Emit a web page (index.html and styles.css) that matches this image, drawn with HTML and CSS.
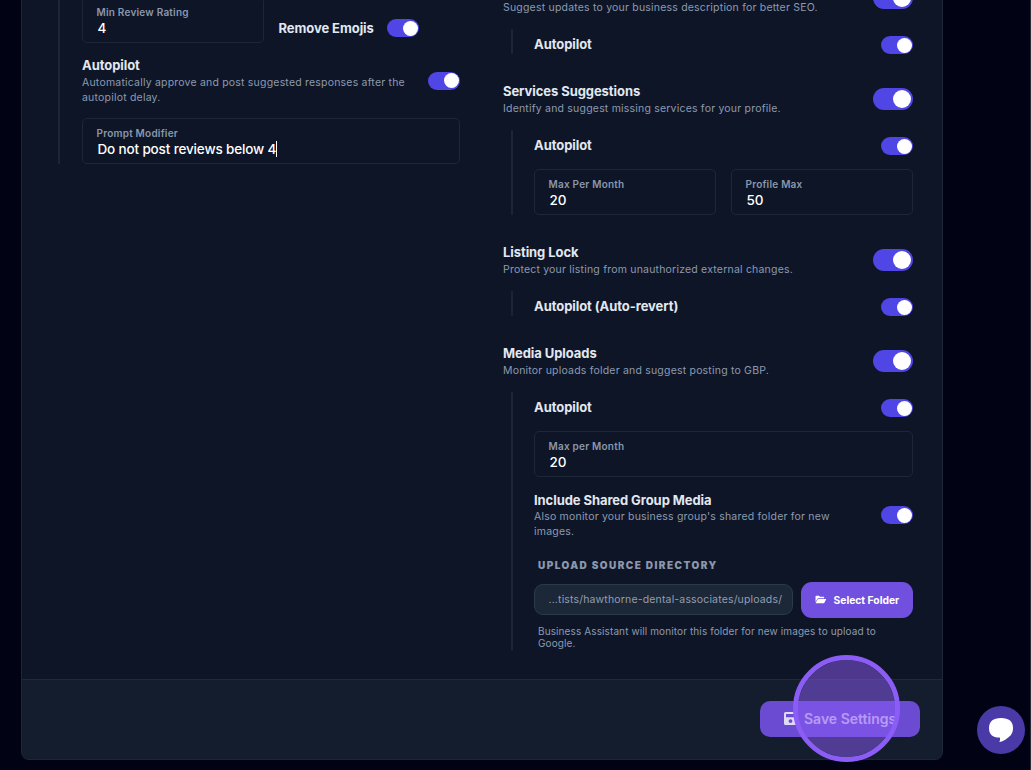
FILE: index.html
```html
<!DOCTYPE html>
<html lang="en">
  <head>
    <meta charset="utf-8">
    <title>Settings</title>
    <link rel="stylesheet" href="styles.css">
  </head>
  <body>
    <main class="card">
      <div class="columns">
        <section class="column left">
          <div class="sub reviews">
            <div class="pair">
              <label class="field"><span class="label">Min Review Rating</span><span class="value">4</span></label>
              <div class="inline-option">
                <h3>Remove Emojis</h3>
                <span class="toggle small"></span>
              </div>
            </div>
            <div class="option">
              <div class="copy wide">
                <h3>Autopilot</h3>
                <p>Automatically approve and post suggested responses after the autopilot delay.</p>
              </div>
              <span class="toggle small"></span>
            </div>
            <label class="field"><span class="label">Prompt Modifier</span><span class="value"><span class="typed">Do not post reviews below 4</span></span></label>
          </div>
        </section>

        <section class="column right">
          <div class="head">
            <div class="copy first">
              <p>Suggest updates to your business description for better SEO.</p>
            </div>
            <span class="toggle"></span>
          </div>
          <div class="sub">
            <div class="option"><h3>Autopilot</h3><span class="toggle small"></span></div>
          </div>

          <div class="head">
            <div class="copy">
              <h3>Services Suggestions</h3>
              <p>Identify and suggest missing services for your profile.</p>
            </div>
            <span class="toggle"></span>
          </div>
          <div class="sub">
            <div class="option"><h3>Autopilot</h3><span class="toggle small"></span></div>
            <div class="pair">
              <label class="field"><span class="label">Max Per Month</span><span class="value">20</span></label>
              <label class="field"><span class="label">Profile Max</span><span class="value">50</span></label>
            </div>
          </div>

          <div class="head">
            <div class="copy">
              <h3>Listing Lock</h3>
              <p>Protect your listing from unauthorized external changes.</p>
            </div>
            <span class="toggle"></span>
          </div>
          <div class="sub">
            <div class="option"><h3>Autopilot (Auto-revert)</h3><span class="toggle small"></span></div>
          </div>

          <div class="head">
            <div class="copy">
              <h3>Media Uploads</h3>
              <p>Monitor uploads folder and suggest posting to GBP.</p>
            </div>
            <span class="toggle"></span>
          </div>
          <div class="sub">
            <div class="option"><h3>Autopilot</h3><span class="toggle small"></span></div>
            <label class="field"><span class="label">Max per Month</span><span class="value">20</span></label>
            <div class="option group-media">
              <div class="copy shared">
                <h3>Include Shared Group Media</h3>
                <p>Also monitor your business group's shared folder for new images.</p>
              </div>
              <span class="toggle small"></span>
            </div>
            <div class="upload">
              <h4>Upload Source Directory</h4>
              <div class="picker">
                <span class="path">...tists/hawthorne-dental-associates/uploads/</span>
                <button class="select">
                  <svg width="12" height="9" viewBox="0 0 13 10"><path fill="#fff" d="M1.2 .8h3l1.2 1.2h3.800q.9 0 .9.9v.7H3.600q-.7 0-1.100.7L.4 7.700V1.600q0-.8.8-.8zM3.700 4.400h8.100q.8 0 .4.7l-2 3.500q-.4.7-1.200.7H1.100q-.8 0-.4-.7l2-3.500q.3-.7 1-.7z"/></svg>
                  Select Folder
                </button>
              </div>
              <p class="help">Business Assistant will monitor this folder for new images to upload to Google.</p>
            </div>
          </div>
        </section>
      </div>

      <footer class="footer">
        <button class="save">
          <svg width="13" height="13" viewBox="0 0 13 13"><path fill="currentColor" fill-rule="evenodd" d="M1.500 0h8.500L13 3v8.500q0 1.500-1.500 1.500h-10Q0 13 0 11.500v-10Q0 0 1.500 0zM2 2v3.200h8V2zM6.500 7.200a1.900 1.900 0 1 0 .01 0z"/></svg>
          Save Settings
        </button>
      </footer>
    </main>

    <div class="click-marker"></div>
    <button class="chat" aria-label="Chat">
      <svg width="24" height="24" viewBox="0 0 24 24"><path fill="#fff" d="M12 0C20 0 24 3.500 24 10C24 15.500 21.500 18 18.500 20C16 22 14 23.500 10.300 24C11.200 22.500 11.300 21 10.700 19.600C3.500 19.400 0 16.500 0 10C0 3.500 4 0 12 0z"/></svg>
    </button>
    <div class="edge"></div>
  </body>
</html>
```
FILE: styles.css
```css
* {
  box-sizing: border-box;
}

body {
  margin: 0;
  height: 770px;
  overflow: hidden;
  background: #010314;
  color: #e2e8f0;
  font-family: Inter, "Liberation Sans", sans-serif;
}

h3,
h4,
p {
  margin: 0;
}

h3 {
  font-size: 13px;
  font-weight: 700;
  line-height: 17px;
  letter-spacing: -0.07px;
}

p {
  color: #8d9aaf;
  font-size: 10.5px;
  line-height: 15px;
  letter-spacing: 0.2px;
}

button {
  border: 0;
  font-family: inherit;
  color: #fff;
}

svg {
  display: block;
  flex: none;
}

.card {
  width: 922px;
  height: 760px;
  margin-left: 21px;
  display: flex;
  flex-direction: column;
  overflow: hidden;
  background: #0e1527;
  border: 1px solid #1e2637;
  border-top: 0;
  border-radius: 0 0 8px 8px;
}

.columns {
  height: 679px;
  flex: none;
  display: grid;
  grid-template-columns: 402px 410px;
  gap: 43px;
  padding: 0 29px 0 36px;
}

.left {
  margin-top: -10px;
}

.right {
  margin-top: -18px;
}

.head {
  height: 32px;
  display: flex;
  align-items: center;
  justify-content: space-between;
}

.copy p {
  padding-top: 1px;
  margin-bottom: -1px;
}

.copy.first {
  padding-top: 17px;
}

.sub {
  display: flex;
  flex-direction: column;
  gap: 14px;
  margin: 15px 0 29px 8px;
  padding: 7px 0 0 21px;
  border-left: 2px solid #1c2435;
}

.reviews {
  margin: 0;
  padding-left: 22px;
}

.option {
  display: flex;
  align-items: center;
  justify-content: space-between;
}

.option > h3 {
  padding-bottom: 1px;
}

.group-media {
  padding-top: 1px;
}

.wide {
  width: 334px;
}

.shared {
  width: 310px;
}

.shared p {
  line-height: 14.5px;
}

.pair {
  display: grid;
  grid-template-columns: 1fr 1fr;
  gap: 15px;
}

.inline-option {
  display: flex;
  align-items: center;
  gap: 13px;
  padding-top: 16px;
}

.field {
  height: 46px;
  display: flex;
  flex-direction: column;
  padding: 7px 13.5px;
  border: 1px solid #1e2637;
  border-radius: 5px;
}

.label {
  color: #8a97ac;
  font-size: 10px;
  font-weight: 600;
  line-height: 14px;
  letter-spacing: 0.22px;
}

.value {
  color: #fff;
  font-size: 13.5px;
  font-weight: 500;
  line-height: 17px;
  letter-spacing: -0.15px;
  margin-top: 1px;
  padding-left: 1px;
}

.typed {
  display: inline-block;
  height: 16px;
  border-right: 1px solid #fff;
}

.toggle {
  width: 40px;
  height: 22px;
  flex: none;
  display: flex;
  align-items: center;
  justify-content: flex-end;
  padding-right: 2px;
  border-radius: 11px;
  background: #4f46e5;
}

.toggle::after {
  content: "";
  width: 18px;
  height: 18px;
  border-radius: 50%;
  background: #fff;
}

.small {
  width: 32px;
  height: 18px;
  padding-right: 1px;
}

.small::after {
  width: 15px;
  height: 15px;
}

.upload {
  padding-top: 6px;
}

h4 {
  margin-left: 4px;
  color: #8a97ac;
  font-size: 10px;
  font-weight: 900;
  line-height: 14px;
  letter-spacing: 1.45px;
  text-transform: uppercase;
}

.picker {
  display: flex;
  align-items: center;
  gap: 8px;
  margin-top: 10px;
}

.path {
  width: 259px;
  height: 31px;
  margin-bottom: 1px;
  padding-left: 13.5px;
  border: 1px solid #2c394a;
  border-radius: 9px;
  background: #1c2737;
  color: #929eb2;
  font-size: 10.5px;
  line-height: 29px;
  letter-spacing: 0.16px;
  white-space: nowrap;
}

.select {
  width: 112px;
  height: 36px;
  display: flex;
  align-items: center;
  gap: 6.5px;
  padding: 0 0 1px 14px;
  border-radius: 11px;
  background: #7150df;
  font-size: 10.3px;
  font-weight: 700;
  white-space: nowrap;
}

.help {
  width: 350px;
  margin: 7px 0 0 4px;
  padding-bottom: 1px;
  font-size: 10px;
  line-height: 12px;
  letter-spacing: 0.11px;
}

.footer {
  flex: 1;
  display: flex;
  align-items: center;
  justify-content: flex-end;
  padding: 0 22px 2px 0;
  border-top: 1px solid #1e293a;
  background: #141d2e;
}

.save {
  width: 160px;
  height: 36px;
  display: flex;
  align-items: center;
  gap: 7px;
  padding: 0 0 0 24px;
  border-radius: 10px;
  background: #6a4bd2;
  color: #e1daf6;
  font-size: 14px;
  font-weight: 600;
  white-space: nowrap;
}

/* cursor highlight over the save button */
.click-marker {
  position: absolute;
  left: 793px;
  top: 655px;
  width: 107px;
  height: 107px;
  border: 5px solid #8b5cf6;
  border-radius: 50%;
  background: rgba(139, 92, 246, 0.5);
  background-clip: padding-box;
}

.chat {
  position: absolute;
  left: 977px;
  top: 706px;
  width: 48px;
  height: 48px;
  display: flex;
  align-items: center;
  justify-content: center;
  padding: 0;
  border-radius: 50%;
  background: #4a3aa8;
}

.edge {
  position: absolute;
  top: 0;
  right: 0;
  width: 1px;
  height: 770px;
  background: #2c2d38;
}
```
